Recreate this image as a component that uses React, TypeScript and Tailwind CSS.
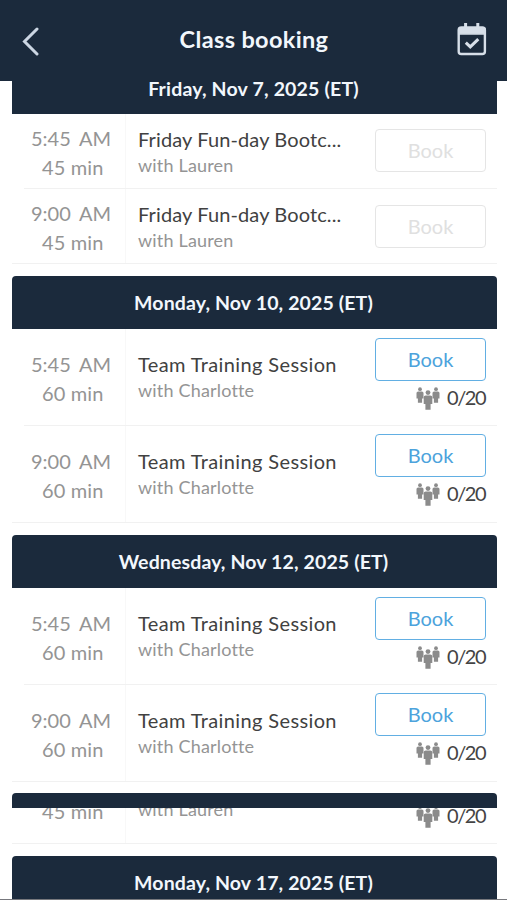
type Session = {
  time: string;
  duration: string;
  title: string;
  coach: string;
  spots?: string;
};

type Day = {
  label: string;
  sessions: Session[];
};

const friday: Session[] = [
  { time: "5:45", duration: "45 min", title: "Friday Fun-day Bootc...", coach: "with Lauren" },
  { time: "9:00", duration: "45 min", title: "Friday Fun-day Bootc...", coach: "with Lauren" },
];

const team: Session[] = [
  { time: "5:45", duration: "60 min", title: "Team Training Session", coach: "with Charlotte", spots: "0/20" },
  { time: "9:00", duration: "60 min", title: "Team Training Session", coach: "with Charlotte", spots: "0/20" },
];

const days: Day[] = [
  { label: "Monday, Nov 10, 2025 (ET)", sessions: team },
  { label: "Wednesday, Nov 12, 2025 (ET)", sessions: team },
];

function PeopleIcon() {
  return (
    <svg width="24" height="24" viewBox="0 0 24 24" fill="#8b8b8b">
      <circle cx="4" cy="2.2" r="1.9" />
      <path d="M2.2 4.4h3.6q1.7 0 1.7 1.7v5.4H6.1v4.3H1.9v-4.3H.5V6.1q0-1.7 1.7-1.7z" />
      <circle cx="20" cy="2.2" r="1.9" />
      <path d="M18.2 4.4h3.6q1.7 0 1.7 1.7v5.4h-1.4v4.3h-4.2v-4.3h-1.4V6.1q0-1.7 1.7-1.7z" />
      <circle cx="12" cy="5.6" r="2.4" />
      <path d="M9.7 8.5h4.6q2 0 2 2v6.4h-1.7v5.9H9.4v-5.9H7.7v-6.4q0-2 2-2z" />
    </svg>
  );
}

function CalendarIcon() {
  return (
    <svg className="-mt-1" width="30" height="34" viewBox="0 0 30 34" fill="none" stroke="#d7dfe9">
      <rect x="1.7" y="5.4" width="26.2" height="26.6" rx="2.6" strokeWidth="2.4" />
      <path d="M1.7 6.5h26.2v5.4H1.7z" fill="#d7dfe9" strokeWidth="1.5" />
      <path d="M8.6 1v6M20.8 1v6" strokeWidth="3" />
      <path d="M8.8 20.6l4.5 4.3 8-7.8" strokeWidth="3" />
    </svg>
  );
}

function Spots({ value }: { value: string }) {
  return (
    <div className="flex h-6 items-center gap-[7px]">
      <PeopleIcon />
      <span className="w-[39px] pb-1 text-[20px] leading-6 tracking-[-1.4px] text-[#444]">{value}</span>
    </div>
  );
}

function Banner({ label }: { label: string }) {
  return (
    <h2 className="flex h-[53px] items-center justify-center rounded-t bg-[#1b2a3c] pr-0.5 text-[19.5px] font-bold tracking-[0.13px] whitespace-pre text-[#f2f7fc]">
      {label}
    </h2>
  );
}

function Row({ session, last }: { session: Session; last: boolean }) {
  const open = Boolean(session.spots);
  return (
    <div className={`flex ${open ? "h-[97px]" : "h-[75px]"}`}>
      <div className={`flex flex-1 border-b border-[#f1f1f1] ${last ? "" : "ml-3"}`}>
        <div
          className={`flex flex-col border-r border-[#f8f8f8] text-[20px] text-[#949494] ${open ? "pt-[21px]" : "pt-2.5"} ${last ? "w-[114px] pl-[19px]" : "w-[102px] pl-[7px]"}`}
        >
          <div className="flex h-[29px] w-20 justify-between leading-[29px]">
            <span>{session.time}</span>
            <span>AM</span>
          </div>
          <div className="ml-[11px] h-[29px] leading-[29px] tracking-[0.15px] whitespace-nowrap">{session.duration}</div>
        </div>
        <div className={`flex-1 pl-3 ${open ? "pt-[22px]" : "pt-3"}`}>
          <div
            className={`h-[26px] text-[20px] leading-[26px] whitespace-nowrap text-[#414141] ${open ? "tracking-[0.38px]" : "tracking-[0.12px]"}`}
          >
            {session.title}
          </div>
          <div className="h-[26px] text-[18px] leading-[26px] tracking-[0.18px] whitespace-nowrap text-[#949494]">
            {session.coach}
          </div>
        </div>
        <div
          className={`flex flex-col items-end pr-[11px] ${open ? (last ? "pt-2" : "pt-[9px]") : last ? "pt-4" : "pt-[15px]"}`}
        >
          <button
            className={`flex h-[43px] w-[111px] items-center justify-center rounded border pb-px text-[20px] ${open ? "mb-1.5 border-[#62afe3] text-[#4da3dc]" : "border-[#e5e5e5] text-[#e0e0e0]"}`}
          >
            Book
          </button>
          {session.spots && <Spots value={session.spots} />}
        </div>
      </div>
    </div>
  );
}

// Bottom part of a session that has scrolled up under its banner
function RowTail({ session }: { session: Session }) {
  return (
    <div className="flex h-9 items-start overflow-hidden border-b border-[#f1f1f1]">
      <div className="h-full w-[114px] border-r border-[#f8f8f8] pl-[30px]">
        <div className="-mt-[11px] text-[20px] leading-[29px] tracking-[0.15px] text-[#949494]">{session.duration}</div>
      </div>
      <div className="-mt-3 flex-1 pl-3 text-[18px] leading-[26px] tracking-[0.18px] text-[#949494]">
        {session.coach}
      </div>
      <div className="-mt-[3px] pr-[11px]">
        <Spots value="0/20" />
      </div>
    </div>
  );
}

export default function App() {
  return (
    <div className="flex h-[900px] w-full flex-col overflow-hidden border-b border-[#77787d] bg-white font-[Lato,sans-serif]">
      <header className="flex h-[81px] shrink-0 items-center justify-between bg-[#1b2a3c] pr-5 pl-[21px]">
        <svg width="20" height="30" viewBox="0 0 20 30" fill="none" stroke="#ccd6e3" strokeWidth="3" strokeLinecap="round">
          <path d="M16 3L3.5 15.5 16 28" />
        </svg>
        <h1 className="pb-px pl-2.5 text-[23.5px] font-bold tracking-[0.35px] text-[#f2f7fc]">Class booking</h1>
        <CalendarIcon />
      </header>

      <main className="mr-2.5 ml-3 flex flex-col gap-3">
        <section>
          <h2 className="flex h-[33px] items-start justify-center bg-[#1b2a3c] pr-0.5 text-[19.5px] leading-[15px] font-bold tracking-[0.18px] text-[#f2f7fc]">
            Friday, Nov 7, 2025 (ET)
          </h2>
          {friday.map((session, i) => (
            <Row key={session.time} session={session} last={i === 1} />
          ))}
        </section>

        {days.map((day) => (
          <section key={day.label}>
            <Banner label={day.label} />
            {day.sessions.map((session, i) => (
              <Row key={session.time} session={session} last={i === 1} />
            ))}
          </section>
        ))}

        <section className="-mt-px">
          <div className="h-[15px] rounded-t bg-[#1b2a3c]" />
          <RowTail session={friday[1]} />
        </section>

        <section>
          <Banner label="Monday, Nov 17, 2025 (ET)" />
        </section>
      </main>
    </div>
  );
}
